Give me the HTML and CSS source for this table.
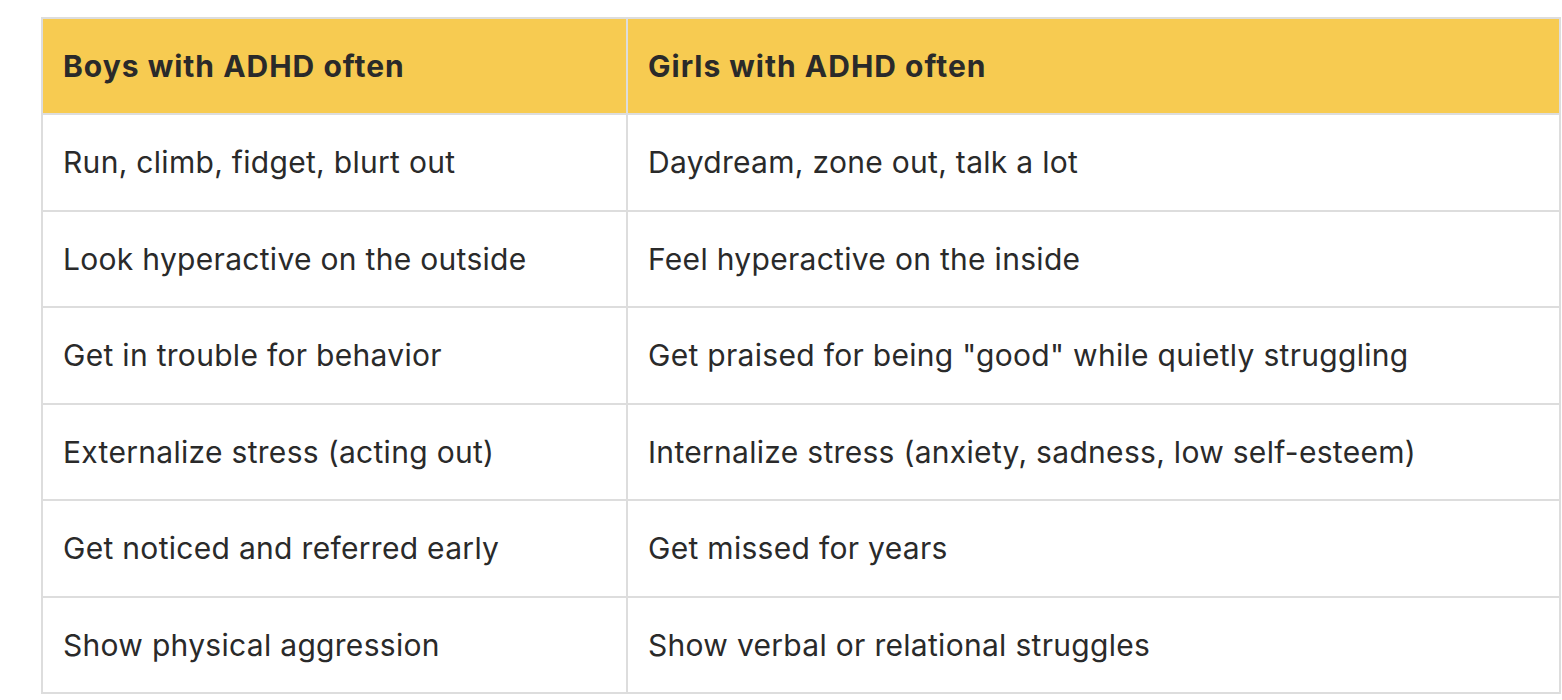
FILE: index.html
```html
<!DOCTYPE html>
<html>
<head>
<meta charset="utf-8">
<link rel="stylesheet" href="styles.css">
</head>
<body>
<div class="wrap">
<table class="cmp">
<colgroup><col class="c1"><col class="c2"></colgroup>
<thead>
<tr><th>Boys with ADHD often</th><th>Girls with ADHD often</th></tr>
</thead>
<tbody>
<tr><td>Run, climb, fidget, blurt out</td><td>Daydream, zone out, talk a lot</td></tr>
<tr><td>Look hyperactive on the outside</td><td>Feel hyperactive on the inside</td></tr>
<tr><td>Get in trouble for behavior</td><td>Get praised for being "good" while quietly struggling</td></tr>
<tr><td>Externalize stress (acting out)</td><td>Internalize stress (anxiety, sadness, low self-esteem)</td></tr>
<tr><td>Get noticed and referred early</td><td>Get missed for years</td></tr>
<tr><td>Show physical aggression</td><td>Show verbal or relational struggles</td></tr>
</tbody>
</table>
</div>
</body>
</html>
```
FILE: styles.css
```css
html, body {
  margin: 0;
  padding: 0;
  background: #ffffff;
}
.wrap {
  padding: 17px 0 0 41px;
}
.cmp {
  border-collapse: collapse;
  width: 1520px;
  table-layout: fixed;
  font-family: Inter, "Noto Sans", sans-serif;
  font-size: 30px;
  color: #2a2a2a;
}
.c1 { width: 585px; }
.cmp th, .cmp td {
  border: 2px solid #dddddd;
  text-align: left;
  padding: 0 20px;
  line-height: 36px;
  box-sizing: border-box;
}
.cmp th {
  background: #f7cb51;
  font-weight: 700;
  letter-spacing: 1px;
  height: 96px;
}
.cmp td {
  height: 96.5px;
  font-weight: 400;
  letter-spacing: 0.3px;
}
```
